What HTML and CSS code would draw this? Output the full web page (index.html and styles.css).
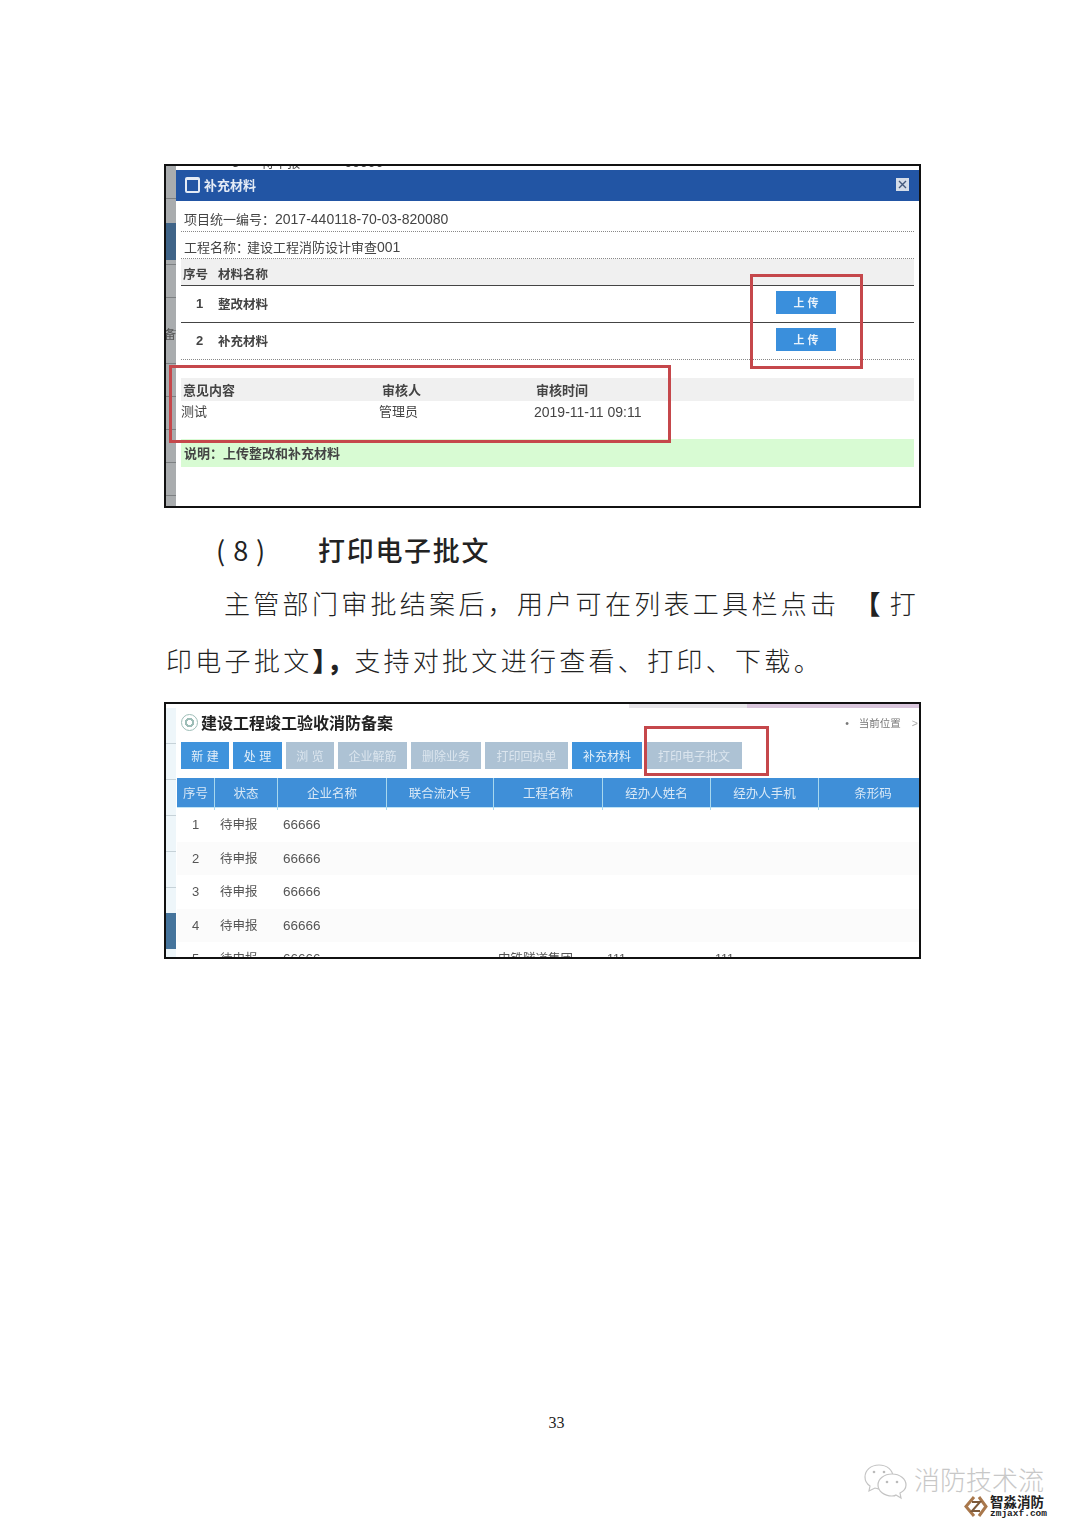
FILE: index.html
```html
<!DOCTYPE html>
<html lang="zh-CN">
<head>
  <meta charset="UTF-8">
  <title>打印电子批文</title>
  <link rel="stylesheet" href="styles.css">
</head>
<body>
  <div class="page">
    <!-- upload dialog screenshot -->
    <div class="shot shot-dialog">
      <div class="side">
        <div class="side-blue"></div>
        <div class="side-char">备</div>
      </div>
      <div class="dialog">
        <div class="behind"><span class="behind-text"><span>5</span><span>待申报</span><span>66666</span></span></div>
        <div class="dialog-title">
          <span class="win-icon"></span>
          <span>补充材料</span>
          <span class="close-x">
            <svg width="13" height="13" viewBox="0 0 13 13"><rect width="13" height="13" fill="#d5dde8"/><path d="M3 3l7 7M10 3l-7 7" stroke="#44597c" stroke-width="1.4"/></svg>
          </span>
        </div>
        <div class="dialog-body">
          <div class="info-row info-first">项目统一编号：<span class="num">2017-440118-70-03-820080</span></div>
          <div class="info-row info-second">工程名称：<span class="project">建设工程消防设计审查<span class="num">001</span></span></div>
          <div class="mat-head"><span class="mat-head-no">序号</span><span>材料名称</span></div>
          <div class="mat-row">
            <span class="mat-no">1</span><span class="mat-name">整改材料</span>
            <span class="upload-btn">上 传</span>
          </div>
          <div class="mat-row mat-last">
            <span class="mat-no">2</span><span class="mat-name">补充材料</span>
            <span class="upload-btn">上 传</span>
          </div>
          <div class="op-head"><span>意见内容</span><span>审核人</span><span>审核时间</span></div>
          <div class="op-row"><span>测试</span><span>管理员</span><span class="num">2019-11-11 09:11</span></div>
          <div class="note">说明：上传整改和补充材料</div>
        </div>
      </div>
      <div class="red-box box-opinion"></div>
      <div class="red-box box-upload"></div>
    </div>

    <h3 class="doc-heading"><span class="doc-no">(8)</span>打印电子批文</h3>
    <p class="doc-text doc-first">主管部门审批结案后，用户可在列表工具栏点<span class="gap-after">击</span><span class="bracket">【</span>打</p>
    <p class="doc-text">印电子批文<span class="bracket-end">】，</span>支持对批文进行查看、打印、下载。</p>

    <!-- list page screenshot -->
    <div class="shot shot-list">
      <div class="tabs-strip"><span class="tab-grey"></span><span class="tab-lilac"></span></div>
      <div class="list-wrap">
        <div class="side side-light">
          <div class="side-dark"></div>
        </div>
        <div class="list">
          <div class="list-top">
            <span class="ring"></span>
            <span class="list-title">建设工程竣工验收消防备案</span>
            <span class="crumb"><span class="crumb-dot">•</span>当前位置<span class="crumb-arrow">&gt;</span></span>
          </div>
          <div class="toolbar">
            <span class="tool on w48">新 建</span>
            <span class="tool on w49">处 理</span>
            <span class="tool w48">浏 览</span>
            <span class="tool w69">企业解筋</span>
            <span class="tool w70">删除业务</span>
            <span class="tool w83">打印回执单</span>
            <span class="tool on w70">补充材料</span>
            <span class="tool w96">打印电子批文</span>
          </div>
          <div class="grid grid-head">
            <span>序号</span><span>状态</span><span>企业名称</span><span>联合流水号</span><span>工程名称</span><span>经办人姓名</span><span>经办人手机</span><span class="head-last">条形码</span>
          </div>
          <div class="grid grid-row"><span class="c">1</span><span>待申报</span><span>66666</span></div>
          <div class="grid grid-row alt"><span class="c">2</span><span>待申报</span><span>66666</span></div>
          <div class="grid grid-row"><span class="c">3</span><span>待申报</span><span>66666</span></div>
          <div class="grid grid-row alt"><span class="c">4</span><span>待申报</span><span>66666</span></div>
          <div class="grid grid-row"><span class="c">5</span><span>待申报</span><span>66666</span><span></span><span>中铁隧道集团</span><span>111</span><span>111</span></div>
        </div>
      </div>
      <div class="red-box box-print"></div>
    </div>

    <div class="page-no">33</div>
  </div>

  <!-- account watermark -->
  <div class="mark">
    <svg class="mark-chat" width="44" height="36" viewBox="0 0 44 36" fill="#fff" stroke="#c4c4c4" stroke-width="1.2">
      <path d="M15 1C7 1 1 6 1 13c0 4 2 7 5 9l-1 5 6-3c1 0 3 1 4 1 8 0 14-5 14-12S23 1 15 1z"/>
      <path d="M28 10c-8 0-14 5-14 11s6 11 14 11c2 0 3 0 4-1l5 3-1-5c4-2 6-5 6-8 0-6-6-11-14-11z"/>
      <circle cx="10" cy="8" r="1.3" stroke="none" fill="#bbb"/><circle cx="20" cy="8" r="1.3" stroke="none" fill="#bbb"/>
      <circle cx="23" cy="18" r="1.3" stroke="none" fill="#bbb"/><circle cx="33" cy="18" r="1.3" stroke="none" fill="#bbb"/>
    </svg>
    <span class="mark-name">消防技术流</span>
    <div class="mark-site">
      <svg class="mark-logo" width="24" height="25" viewBox="0 0 24 25" fill="none" stroke="#a9784c">
        <path d="M10 3l-8 9.500 8 9.500" stroke-width="3"/>
        <path d="M15 3l7 9.500-7 9.500" stroke-width="3"/>
        <path d="M8 8h8l-8 9h8" stroke="#7d5a3a" stroke-width="2"/>
      </svg>
      <div>
        <div class="site-cn">智淼消防</div>
        <div class="site-en">zmjaxf.com</div>
      </div>
    </div>
  </div>
</body>
</html>
```

FILE: styles.css
```css
html, body {
  margin: 0;
  height: 1527px;
  overflow: hidden;
  background: #fff;
}
.page {
  padding: 164px 0 0 164px;
  font-family: 'Noto Sans CJK SC', sans-serif;
  color: #222;
}

/* screenshots pasted in the document */
.shot {
  position: relative;
  width: 757px;
  box-sizing: border-box;
  border: 2px solid #111;
  overflow: hidden;
  background: #fff;
  font-family: 'Liberation Sans', 'Noto Sans CJK SC', sans-serif;
}
.shot > *:not(.red-box) {
  filter: blur(0.45px);
}
.red-box {
  position: absolute;
  box-sizing: border-box;
  border: 3px solid #c5474b;
}
.box-opinion { left: 3px; top: 199px; width: 502px; height: 78px; }
.box-upload { left: 584px; top: 108px; width: 113px; height: 95px; }
.box-print { left: 478px; top: 22px; width: 125px; height: 50px; }

/* dialog */
.shot-dialog {
  height: 344px;
  display: flex;
}
.side {
  width: 10px;
  flex: none;
  position: relative;
  font-size: 12px;
  color: #555;
  background: repeating-linear-gradient(#a9acae 0 32px, #7d8082 32px 33px);
}
.side-blue {
  height: 37px;
  margin-top: 57px;
  background: #3f6488;
}
.side-char {
  margin-top: 65px;
  margin-left: -2px;
}
.dialog {
  flex: 1;
  background: #fff;
}
.behind {
  height: 4px;
  overflow: hidden;
  font-size: 13px;
  line-height: 13px;
  color: #444;
}
.behind-text {
  display: flex;
  margin-top: -10px;
  padding-left: 56px;
}
.behind-text span:nth-child(2) {
  margin-left: 22px;
}
.behind-text span:nth-child(3) {
  margin-left: 44px;
  font-size: 14px;
}
.dialog-title {
  height: 31px;
  background: #2255a4;
  color: #e4ebf5;
  display: flex;
  align-items: center;
  padding: 0 10px 2px 9px;
  box-sizing: border-box;
  font-size: 13px;
  font-weight: 700;
}
.win-icon {
  width: 11px;
  height: 11px;
  margin-right: 4px;
  border: 2px solid #e4ebf5;
  border-top-width: 3px;
  border-radius: 2px;
}
.close-x {
  margin-left: auto;
  display: flex;
}
.dialog-body {
  padding: 0 5px;
  font-size: 13px;
  color: #444;
}
.num {
  font-size: 14px;
}
.info-row {
  height: 26px;
  line-height: 26px;
  padding-left: 3px;
  border-bottom: 1px dotted #888;
}
.info-first {
  height: 30px;
  line-height: 37px;
}
.info-second {
  line-height: 30px;
}
.project {
  color: #444;
  margin-left: -2px;
}
.mat-head {
  height: 26px;
  line-height: 32px;
  background: #f0f0f0;
  border-bottom: 1px solid #444;
  font-weight: 700;
  padding-left: 2px;
  font-size: 12.500px;
}
.mat-head-no {
  margin-right: 10px;
}
.mat-row {
  height: 36px;
  display: flex;
  align-items: center;
  border-bottom: 1px solid #444;
  font-weight: 700;
  font-size: 12.500px;
}
.mat-last {
  border-bottom: 1px dotted #888;
}
.mat-no {
  width: 37px;
  text-align: center;
  margin-top: -2px;
  font-size: 13px;
}
.mat-name {
  margin-top: -2px;
}
.upload-btn {
  margin-left: auto;
  margin-right: 78px;
  width: 60px;
  height: 23px;
  line-height: 24px;
  margin-top: -3px;
  text-align: center;
  background: #3a8fdc;
  color: #e8f2fb;
  font-size: 11px;
}
.op-head {
  margin-top: 18px;
  height: 23px;
  line-height: 26px;
  background: #f0f0f0;
  font-weight: 700;
  font-size: 13px;
  display: grid;
  grid-template-columns: 199px 154px 1fr;
  padding-left: 2px;
}
.op-row {
  height: 38px;
  line-height: 22px;
  display: grid;
  grid-template-columns: 198px 155px 1fr;
}
.note {
  height: 28px;
  line-height: 30px;
  background: #d8fbd3;
  font-weight: 700;
  font-size: 13px;
  padding-left: 3px;
}

/* document text */
.doc-heading {
  margin: 15px 0 0;
  height: 51px;
  line-height: 53px;
  padding-left: 52px;
  font-size: 27px;
  font-weight: 500;
  letter-spacing: 1.700px;
  color: #222;
}
.doc-no {
  display: inline-block;
  width: 102px;
  font-weight: 400;
  letter-spacing: 8px;
}
.doc-text {
  margin: 0;
  height: 57px;
  line-height: 57px;
  padding-left: 2px;
  font-size: 26px;
  font-weight: 300;
  letter-spacing: 3.300px;
  white-space: nowrap;
}
.doc-first {
  padding-left: 60px;
}
.gap-after {
  margin-right: 15px;
}
.bracket {
  font-weight: 900;
  margin-right: 6px;
}
.bracket-end {
  font-weight: 900;
  letter-spacing: 1.300px;
}

/* list page */
.shot-list {
  height: 257px;
  margin-top: 14px;
}
.tabs-strip {
  height: 4px;
  display: flex;
  justify-content: flex-end;
}
.tab-grey {
  width: 118px;
  background: #e8e6ea;
}
.tab-lilac {
  width: 172px;
  background: #d9c6dc;
}
.list-wrap {
  display: flex;
  height: 251px;
}
.side-light {
  background: repeating-linear-gradient(#eef6fa 0 35px, #c6d2d8 35px 36px);
}
.side-dark {
  position: absolute;
  left: 0;
  right: 0;
  top: 205px;
  height: 36px;
  background: #45749c;
}
.list {
  flex: 1;
}
.list-top {
  height: 28px;
  padding-bottom: 2px;
  display: flex;
  align-items: center;
  padding-left: 5px;
}
.ring {
  width: 17px;
  height: 17px;
  box-sizing: border-box;
  border: 1px solid #9dbdb7;
  border-radius: 50%;
  margin-right: 3px;
  background: radial-gradient(#fff 0 2.500px, #9dbdb7 2.500px 4.500px, #fff 4.500px);
}
.list-title {
  font-size: 16px;
  font-weight: 700;
  color: #222;
}
.crumb {
  margin-left: auto;
  font-size: 10.500px;
  color: #777;
  margin-right: 1px;
}
.crumb-dot {
  margin-right: 10px;
}
.crumb-arrow {
  margin-left: 11px;
  color: #aaa;
}
.toolbar {
  height: 27px;
  margin-top: 4px;
  display: flex;
  gap: 4px;
  padding-left: 5px;
}
.tool {
  height: 27px;
  line-height: 30px;
  background: #adc2d4;
  color: #dbe5ee;
  font-size: 12px;
  text-align: center;
  white-space: nowrap;
}
.tool.on {
  background: #3f93dc;
  color: #e3eff9;
}
.w48 { width: 48px; }
.w49 { width: 49px; }
.w69 { width: 69px; }
.w70 { width: 70px; }
.w83 { width: 83px; }
.w96 { width: 96px; }
.grid {
  display: grid;
  margin-left: 1px;
  grid-template-columns: 37px 63px 109px 107px 109px 108px 108px 101px;
}
.grid-head {
  margin-top: 9px;
  height: 29px;
  line-height: 32px;
  background: #3f8fd8;
  color: #d8e8f6;
  font-size: 12.500px;
  text-align: center;
  border-bottom: 1px solid #bfe3f5;
}
.grid-head span + span {
  border-left: 1px solid #a8d8ee;
}
.grid-head .head-last {
  padding-left: 8px;
}
.grid-row {
  height: 33.500px;
  line-height: 34px;
  font-size: 12.500px;
  color: #555;
}
.grid-row.alt {
  background: #fbfbfb;
}
.grid-row span:nth-child(2) {
  padding-left: 6px;
}
.grid-row span:nth-child(3) {
  padding-left: 6px;
  font-size: 13.500px;
}
.grid-row span:nth-child(5),
.grid-row span:nth-child(6),
.grid-row span:nth-child(7) {
  padding-left: 5px;
}
.c {
  text-align: center;
  font-size: 13px;
}

.page-no {
  margin-top: 454px;
  width: 785px;
  text-align: center;
  font-family: 'Liberation Serif', serif;
  font-size: 16px;
  line-height: 20px;
  color: #222;
}

/* watermark sits over the page corner */
.mark {
  position: absolute;
  left: 864px;
  top: 1463px;
  width: 190px;
  height: 60px;
}
.mark-chat {
  position: absolute;
  left: 0;
  top: 1px;
}
.mark-name {
  position: absolute;
  left: 50px;
  top: 3px;
  font-family: 'Noto Sans CJK SC', sans-serif;
  font-size: 26px;
  line-height: 26px;
  font-weight: 300;
  color: #c8c8c8;
  white-space: nowrap;
}
.mark-site {
  position: absolute;
  left: 100px;
  top: 31px;
  display: flex;
  gap: 2px;
  align-items: flex-start;
}
.site-cn {
  font-family: 'Noto Sans CJK SC', sans-serif;
  font-size: 13.500px;
  line-height: 14px;
  font-weight: 700;
  color: #222;
}
.site-en {
  font-family: 'Liberation Mono', monospace;
  font-size: 9.500px;
  line-height: 11px;
  font-weight: 700;
  color: #222;
}
```
